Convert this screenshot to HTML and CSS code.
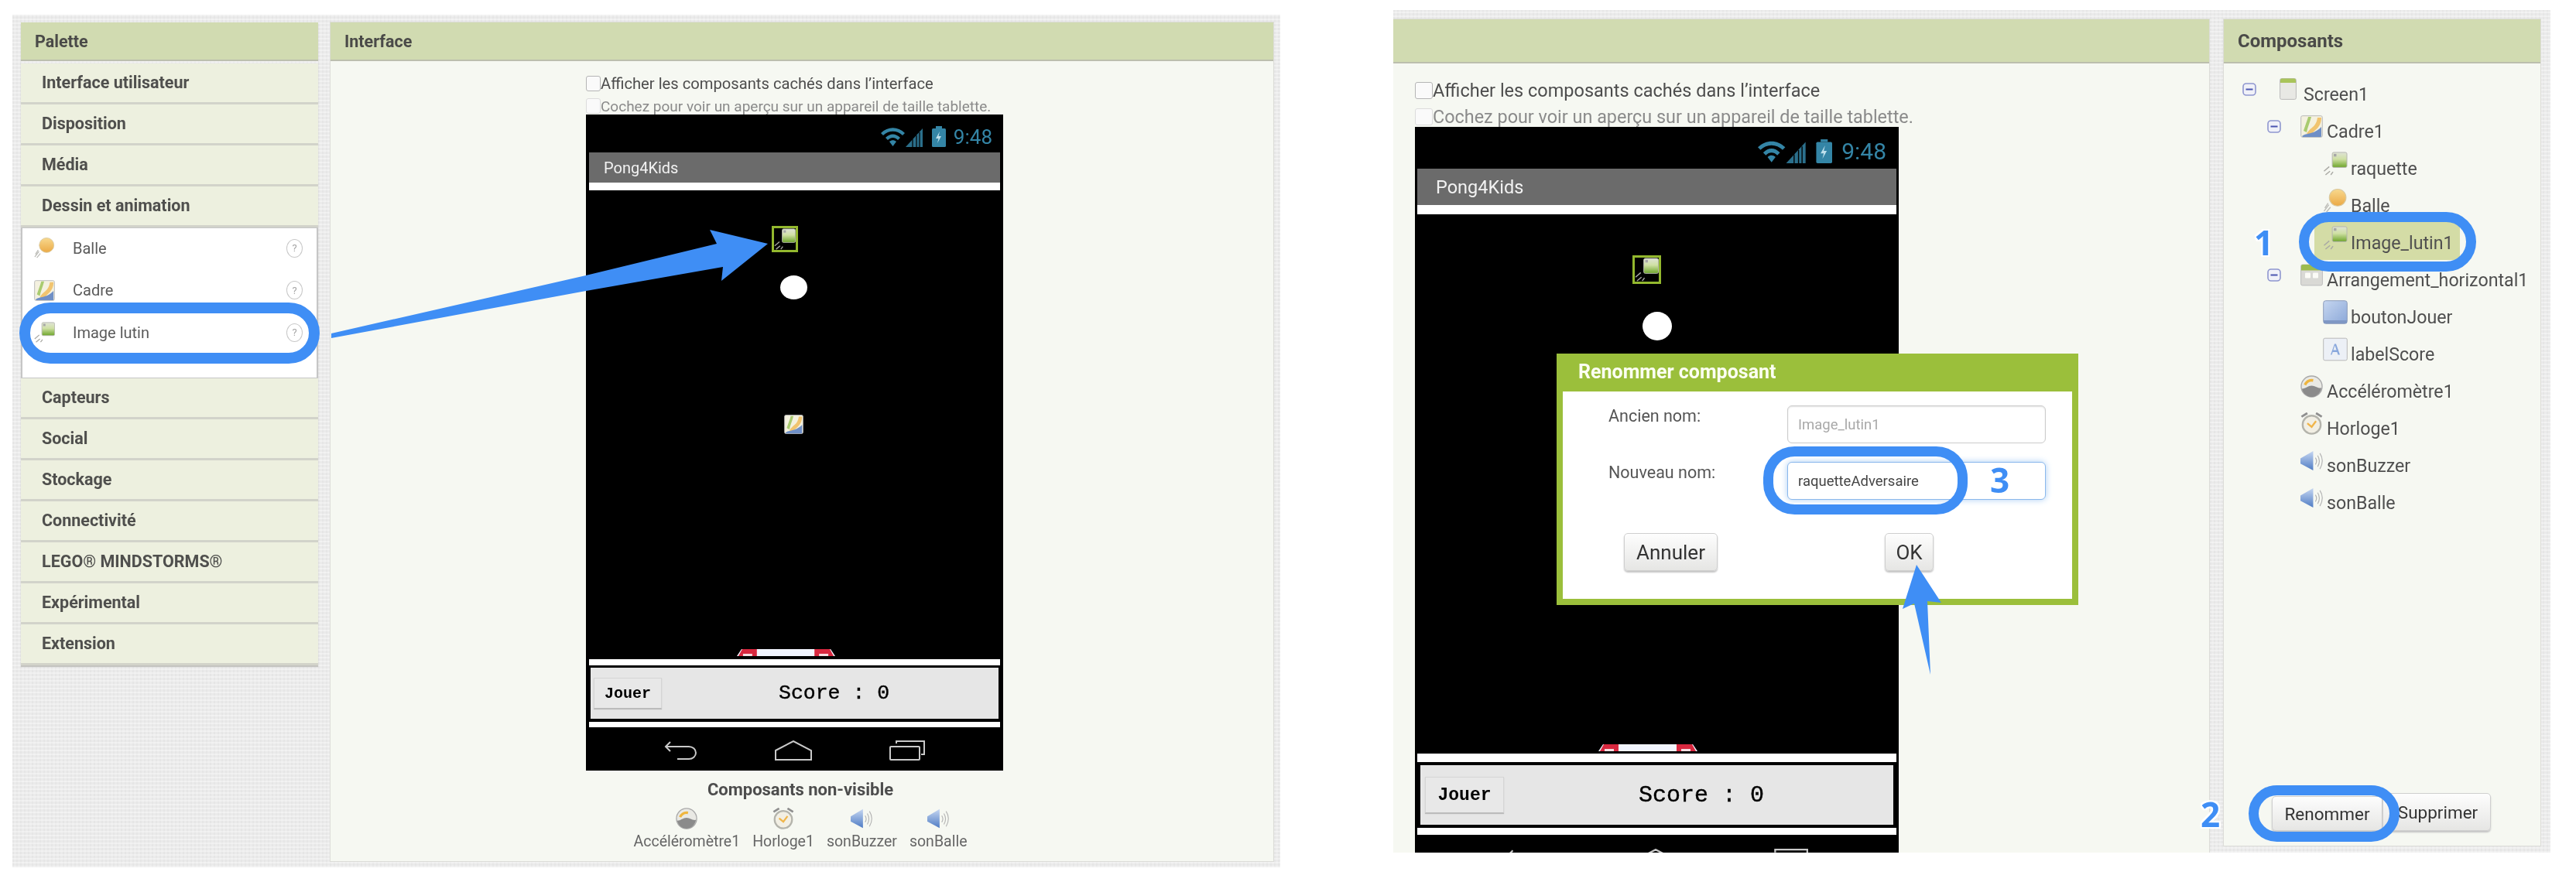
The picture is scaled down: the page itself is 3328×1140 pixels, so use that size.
FILE: index.html
```html
<!DOCTYPE html>
<html lang="fr">
<head>
<meta charset="utf-8">
<title>Pong4Kids</title>
<link rel="stylesheet" href="styles.css">
</head>
<body>
<svg class="defs" width="0" height="0" aria-hidden="true">
  <defs>
    <linearGradient id="gBall" x1="0" y1="0" x2="0" y2="1"><stop offset="0" stop-color="#f8d98e"/><stop offset="1" stop-color="#eba945"/></linearGradient>
    <linearGradient id="gImg" x1="0" y1="0" x2="0" y2="1"><stop offset="0" stop-color="#dfe3d6"/><stop offset=".45" stop-color="#cfe0a4"/><stop offset="1" stop-color="#6da52a"/></linearGradient>
    <linearGradient id="gBtn" x1="0" y1="0" x2="1" y2="1"><stop offset="0" stop-color="#c6d6f0"/><stop offset="1" stop-color="#8ba8d8"/></linearGradient>
    <linearGradient id="gSpk" x1="0" y1="0" x2="0" y2="1"><stop offset="0" stop-color="#c5d6f1"/><stop offset="1" stop-color="#4f7cc4"/></linearGradient>
  </defs>
  <symbol id="i-ball" viewBox="0 0 30 30">
    <path d="M1 28 7 20M4 29 9 23M2 24 6 18" stroke="#bdbdb8" stroke-width="1.4" fill="none"/>
    <circle cx="18" cy="11" r="10.5" fill="url(#gBall)" stroke="#d9c9a0"/>
  </symbol>
  <symbol id="i-sprite" viewBox="0 0 32 32">
    <path d="M1 26 8 20M3 31 9 26M10 31 13 27" stroke="#a9a9a4" stroke-width="1.5" fill="none"/>
    <rect x="12" y="1" width="19.5" height="20" rx="2" fill="url(#gImg)" stroke="#b5b5b0"/>
    <rect x="14" y="3" width="3.5" height="3.5" fill="#a6a6a6"/>
  </symbol>
  <symbol id="i-frame" viewBox="0 0 29 29">
    <rect x=".7" y=".7" width="27.6" height="27.6" rx="2" fill="#f4f1df" stroke="#b9b9b9"/>
    <path d="M4 20C8 8 9 6 10 2h4C12 10 9 16 8 22Z" fill="#a9cb6f"/>
    <path d="M8 24C14 14 20 16 22 3h5C27 16 18 19 14 25Z" fill="#f1c46f"/>
    <path d="M2 27C8 22 16 26 27 15v12a1 1 0 0 1-1 1H3Z" fill="#6f8fc6"/>
  </symbol>
  <symbol id="i-minus" viewBox="0 0 18 17">
    <rect x="1" y="1" width="16" height="15" rx="4" fill="#f0f1f8" stroke="#8f96cf" stroke-width="1.6"/>
    <path d="M4.5 8.5h9" stroke="#4b55b0" stroke-width="2"/>
  </symbol>
  <symbol id="i-screen" viewBox="0 0 22 28">
    <rect x=".6" y=".6" width="20.8" height="26.8" rx="2" fill="#e8e8e4" stroke="#b9b9b9"/>
    <path d="M1 2.500a2 2 0 0 1 2-2h16a2 2 0 0 1 2 2V6H1Z" fill="#a9c45a"/>
  </symbol>
  <symbol id="i-arr" viewBox="0 0 29 28">
    <rect x=".6" y=".6" width="27.8" height="26.800" rx="2" fill="#d9d9d5" stroke="#bdbdbd"/>
    <path d="M1 2.500a2 2 0 0 1 2-2h23a2 2 0 0 1 2 2V8H1Z" fill="#9dbb4d"/>
    <rect x="6" y="11" width="7" height="7" rx="1" fill="#fbfbf6"/>
    <rect x="16" y="11" width="7" height="7" rx="1" fill="#fbfbf6"/>
  </symbol>
  <symbol id="i-button" viewBox="0 0 32 31">
    <rect x=".7" y=".7" width="30.600" height="29.600" rx="3" fill="url(#gBtn)" stroke="#8e9dbb"/>
    <rect x="1" y="26" width="30" height="4" fill="#7f97c4"/>
  </symbol>
  <symbol id="i-label" viewBox="0 0 32 30">
    <rect x=".7" y=".7" width="30.600" height="28.600" rx="2" fill="#ecf0f6" stroke="#b8b8b8"/>
    <path d="M10 22 15 8h2l5 14h-2.500l-1.200-3.600h-5.600L11.500 22ZM13.400 16h4.200L15.500 10Z" fill="#88a7dc"/>
  </symbol>
  <symbol id="i-gauge" viewBox="0 0 30 30">
    <circle cx="15" cy="15" r="14" fill="#e9e9e4" stroke="#a9a9a9" stroke-width="1.400"/>
    <path d="M2 18c5 0 8-4 13-4s8 4 13 3c-1 7-7 12-13 12S3 24 2 18Z" fill="#8b8b8b"/>
    <path d="M6 13c2-4 6-7 11-6" stroke="#efb63f" stroke-width="3.500" fill="none"/>
  </symbol>
  <symbol id="i-clock" viewBox="0 0 30 31">
    <path d="M1 6 9 1M29 6 21 1" stroke="#8f8f8f" stroke-width="3"/>
    <circle cx="15" cy="17" r="12.500" fill="#f2efe4" stroke="#b4b4ac" stroke-width="2.500"/>
    <path d="M9 15l6 5 6-8" stroke="#f0b54a" stroke-width="2.500" fill="none"/>
  </symbol>
  <symbol id="i-speaker" viewBox="0 0 30 28">
    <path d="M0 11 17 1v26L0 18Z" fill="url(#gSpk)"/>
    <path d="M20 10c2 3 2 6 0 9M23 7c3 5 3 10 0 15M26 4c4 6 4 14 0 21" stroke="#b3b3b3" stroke-width="1.200" fill="none"/>
  </symbol>
  <symbol id="i-status" viewBox="0 0 84 27">
    <path d="M0 9C9 0 22 0 31 9l-3 3C21 5 10 5 3 12ZM6 15c6-6 13-6 19 0l-3 3c-4-4-9-4-13 0ZM11 20c3-2.500 6-2.500 9 0l-4.500 6Z" fill="#3485a6"/>
    <path d="M32 27 54 3v24Z" fill="#2b6f8b"/>
    <path d="M41 27V17M46 27V12M50 27V8" stroke="#000" stroke-width="1.200"/>
    <rect x="66" y="3" width="18" height="24" rx="1.500" fill="#3485a6"/>
    <rect x="71" y="0" width="8" height="3" fill="#3485a6"/>
    <path d="M76 7 71 16h3.500l-1.500 6 5-9h-3.500Z" fill="#bfe0ec"/>
  </symbol>
  <symbol id="i-back" viewBox="0 0 43 26">
    <path d="M8 2 2 8l6 6M2 8h30a9 8 0 0 1 0 16H17" fill="none" stroke="#c9c9c9" stroke-width="2"/>
  </symbol>
  <symbol id="i-home" viewBox="0 0 48 26">
    <path d="M1 13 24 1l23 12v12H1Z" fill="none" stroke="#c9c9c9" stroke-width="2"/>
  </symbol>
  <symbol id="i-recent" viewBox="0 0 46 26">
    <path d="M9 4V1h36v17h-4" fill="none" stroke="#c9c9c9" stroke-width="2"/>
    <rect x="1" y="8" width="38" height="17" rx="1" fill="none" stroke="#c9c9c9" stroke-width="2"/>
  </symbol>
  <symbol id="i-paddle" viewBox="0 0 130 9">
    <path d="M1 9 7 0h116l6 9Z" fill="#f2f5ff"/>
    <path d="M3 9 8 0h19v9ZM102 0h20l5 9h-25Z" fill="#d8283f"/>
    <path d="M9 6h12v3H9ZM108 6h12v3h-12Z" fill="#f6dfe2"/>
  </symbol>
</svg>

<main class="stage">

  <section class="shot shot-a">
    <div class="palette">
      <h2 class="head">Palette</h2>
      <div class="cat">Interface utilisateur</div>
      <div class="cat">Disposition</div>
      <div class="cat">Média</div>
      <div class="cat">Dessin et animation</div>
      <ul class="tools">
        <li class="tool"><svg class="tool-i"><use href="#i-ball"/></svg><span class="tool-t">Balle</span><span class="help">?</span></li>
        <li class="tool"><svg class="tool-i"><use href="#i-frame"/></svg><span class="tool-t">Cadre</span><span class="help">?</span></li>
        <li class="tool"><svg class="tool-i"><use href="#i-sprite"/></svg><span class="tool-t">Image lutin</span><span class="help">?</span></li>
      </ul>
      <div class="cat">Capteurs</div>
      <div class="cat">Social</div>
      <div class="cat">Stockage</div>
      <div class="cat">Connectivité</div>
      <div class="cat">LEGO® MINDSTORMS®</div>
      <div class="cat">Expérimental</div>
      <div class="cat">Extension</div>
    </div>

    <div class="panel panel-view">
      <h2 class="head">Interface</h2>
      <div class="view-body view-a">
        <div class="viewer">
          <div class="chk"><i class="box"></i>Afficher les composants cachés dans l’interface</div>
          <div class="chk chk-dim"><i class="box"></i>Cochez pour voir un aperçu sur un appareil de taille tablette.</div>
          <div class="phone">
            <div class="status"><svg class="st-i"><use href="#i-status"/></svg><span class="clock">9:48</span></div>
            <div class="title">Pong4Kids</div>
            <div class="strip strip-top"></div>
            <div class="canvas">
              <div class="sel-box"><svg><use href="#i-sprite"/></svg></div>
              <div class="ball"></div>
              <svg class="cadre"><use href="#i-frame"/></svg>
              <svg class="paddle" preserveAspectRatio="none"><use href="#i-paddle"/></svg>
            </div>
            <div class="strip strip-low"></div>
            <div class="hbar"><div class="jouer">Jouer</div><div class="score">Score : 0</div></div>
            <div class="strip strip-end"></div>
            <div class="nav"><svg class="n-back"><use href="#i-back"/></svg><svg class="n-home"><use href="#i-home"/></svg><svg class="n-rec"><use href="#i-recent"/></svg></div>
          </div>
          <div class="nv-title">Composants non-visible</div>
          <div class="nv-list">
            <div class="nv"><svg class="nv-i"><use href="#i-gauge"/></svg>Accéléromètre1</div>
            <div class="nv"><svg class="nv-i"><use href="#i-clock"/></svg>Horloge1</div>
            <div class="nv"><svg class="nv-i"><use href="#i-speaker"/></svg>sonBuzzer</div>
            <div class="nv"><svg class="nv-i"><use href="#i-speaker"/></svg>sonBalle</div>
          </div>
        </div>
      </div>
    </div>

    <svg class="annot annot-a" viewBox="16 19 1638 1102">
      <rect class="pill" x="32" y="398" width="374" height="65" rx="33"/>
      <polygon class="arrow" points="428,431 757,356 926,315 917,297 992,315 932,363 934,345 757,376 428,437"/>
    </svg>
  </section>

  <section class="shot shot-b">
    <div class="panel panel-view">
      <h2 class="head head-empty"></h2>
      <div class="view-body view-b">
        <div class="viewer">
          <div class="chk"><i class="box"></i>Afficher les composants cachés dans l’interface</div>
          <div class="chk chk-dim"><i class="box"></i>Cochez pour voir un aperçu sur un appareil de taille tablette.</div>
          <div class="phone">
            <div class="status"><svg class="st-i"><use href="#i-status"/></svg><span class="clock">9:48</span></div>
            <div class="title">Pong4Kids</div>
            <div class="strip strip-top"></div>
            <div class="canvas">
              <div class="sel-box"><svg><use href="#i-sprite"/></svg></div>
              <div class="ball"></div>
              <svg class="paddle" preserveAspectRatio="none"><use href="#i-paddle"/></svg>
            </div>
            <div class="strip strip-low"></div>
            <div class="hbar"><div class="jouer">Jouer</div><div class="score">Score : 0</div></div>
            <div class="strip strip-end"></div>
            <div class="nav"><svg class="n-back"><use href="#i-back"/></svg><svg class="n-home"><use href="#i-home"/></svg><svg class="n-rec"><use href="#i-recent"/></svg></div>
          </div>
        </div>
      </div>
    </div>

    <aside class="panel panel-tree">
      <h2 class="head head-tree">Composants</h2>
      <div class="tree">
        <div class="row l0"><svg class="minus"><use href="#i-minus"/></svg><svg class="ic ic-s"><use href="#i-screen"/></svg><span>Screen1</span></div>
        <div class="row l1"><svg class="minus"><use href="#i-minus"/></svg><svg class="ic ic-m"><use href="#i-frame"/></svg><span>Cadre1</span></div>
        <div class="row l2"><svg class="ic ic-l"><use href="#i-sprite"/></svg><span>raquette</span></div>
        <div class="row l2"><svg class="ic ic-l"><use href="#i-ball"/></svg><span>Balle</span></div>
        <div class="row l2-sel"><div class="sel"><svg class="ic ic-l"><use href="#i-sprite"/></svg><span>Image_lutin1</span></div></div>
        <div class="row l1"><svg class="minus"><use href="#i-minus"/></svg><svg class="ic ic-m"><use href="#i-arr"/></svg><span>Arrangement_horizontal1</span></div>
        <div class="row l2"><svg class="ic ic-l"><use href="#i-button"/></svg><span>boutonJouer</span></div>
        <div class="row l2"><svg class="ic ic-l"><use href="#i-label"/></svg><span>labelScore</span></div>
        <div class="row l1n"><svg class="ic ic-m"><use href="#i-gauge"/></svg><span>Accéléromètre1</span></div>
        <div class="row l1n"><svg class="ic ic-m"><use href="#i-clock"/></svg><span>Horloge1</span></div>
        <div class="row l1n"><svg class="ic ic-m"><use href="#i-speaker"/></svg><span>sonBuzzer</span></div>
        <div class="row l1n"><svg class="ic ic-m"><use href="#i-speaker"/></svg><span>sonBalle</span></div>
      </div>
      <div class="actions">
        <div class="btn btn-ren">Renommer</div>
        <div class="btn btn-del">Supprimer</div>
      </div>
    </aside>

    <div class="dialog">
      <div class="dlg-title">Renommer composant</div>
      <div class="dlg-body">
        <div class="field"><span class="f-label">Ancien nom:</span><div class="input input-off">Image_lutin1</div></div>
        <div class="field"><span class="f-label">Nouveau nom:</span><div class="input input-on">raquetteAdversaire</div></div>
        <div class="dlg-btns"><div class="btn btn-cancel">Annuler</div><div class="btn btn-ok">OK</div></div>
      </div>
    </div>

    <svg class="annot annot-b" viewBox="1800 13 1495 1089">
      <rect class="pill" x="2976.500" y="280.500" width="216" height="64" rx="32"/>
      <rect class="pill" x="2284.500" y="583.500" width="251" height="75" rx="34"/>
      <rect class="pill" x="2911.500" y="1021.500" width="182" height="60" rx="30"/>
      <polygon class="arrow" points="2476,730 2508,779 2490,777 2494,872 2473,780 2458,787"/>
    </svg>
    <b class="num num-1">1</b>
    <b class="num num-2">2</b>
    <b class="num num-3">3</b>
  </section>
</main>
</body>
</html>
```

FILE: styles.css
```css
* { box-sizing: border-box; }
html, body { margin: 0; padding: 0; background: #fff; }
body { width: 3328px; height: 1140px; overflow: hidden; font-family: Roboto, "Liberation Sans", sans-serif; color: #444; }
.defs { position: absolute; }
svg { display: block; }
h2 { margin: 0; }
ul { margin: 0; padding: 0; list-style: none; }

.stage { display: flex; align-items: flex-start; }

.shot {
  position: relative;
  display: flex;
  overflow: hidden;
  filter: blur(.6px);
  background-color: #ebebeb;
  background-image:
    repeating-linear-gradient(0deg, rgba(255,255,255,.35) 0 2px, transparent 2px 5px),
    repeating-linear-gradient(90deg, rgba(0,0,0,.025) 0 2px, transparent 2px 5px);
}
.shot-a { width: 1638px; height: 1102px; margin: 19px 0 0 16px; padding: 10px 9px 8px 11px; gap: 16px; }
.shot-b { width: 1495px; height: 1089px; margin: 13px 0 0 146px; padding: 12px 13px 0 0; gap: 19px; }

/* headers */
.head {
  flex: none;
  display: flex; align-items: center;
  background: #d1dbb1;
  border-bottom: 2px solid #bcbfae;
  font-weight: 700; color: #4a4a48;
}
.shot-a .head { height: 50px; padding-left: 18px; font-size: 21.500px; }
.shot-b .head { height: 57px; padding-left: 18px; font-size: 24px; }

/* palette */
.palette { width: 384px; flex: none; align-self: flex-start; box-shadow: 0 2px 1px #c4c4c0; }
.palette .head { margin-bottom: 3px; }
.cat {
  height: 53px; padding: 0 0 2px 27px;
  display: flex; align-items: center;
  background: #edf0df;
  border-bottom: 3px solid #d2d3ca;
  font-size: 21.500px; font-weight: 700; color: #4f4f4d;
}
.tools { height: 195px; padding: 0 2px; background: #fff; border: 1px solid #c6c6c6; border-width: 1px 2px; }
.tool { height: 54.500px; display: flex; align-items: center; padding: 0 16px 3px 13px; }
.tool-i { width: 27px; height: 27px; flex: none; }
.tool-t { margin-left: 23px; flex: 1; font-size: 20px; color: #5a5a5a; }
.help {
  width: 21px; height: 24px; border: 1.500px solid #c8c8c8; border-radius: 50%;
  display: flex; align-items: center; justify-content: center;
  font-size: 13px; color: #a6a6a6;
}

/* panels */
.panel { background: #f6f8f2; display: flex; flex-direction: column; box-shadow: 0 0 0 1px #dcdcd8; }
.panel-view { flex: 1; min-width: 0; }
.panel-tree { width: 409px; flex: none; margin-bottom: 9px; }
.view-body { flex: 1; }
.view-a { padding: 19px 0 0 330px; }
.view-b { padding: 24px 0 0 28px; }
.viewer { width: 554px; }
.view-b .viewer { width: 640px; }

.chk { display: flex; align-items: center; white-space: nowrap; color: #4d4d4d; }
.chk-dim { color: #8a8a8a; }
.box { flex: none; background: #fafafa; border: 1px solid #b5b5b5; border-radius: 3px; }
.chk-dim .box { border-color: #dcdcdc; }
.view-a .chk { font-size: 20.200px; height: 20px; }
.view-a .chk-dim { font-size: 19px; height: 18px; margin-top: 10px; }
.view-a .box { width: 19px; height: 20px; }
.view-b .chk { font-size: 23.500px; height: 22px; }
.view-b .chk-dim { font-size: 23.400px; margin-top: 12px; }
.view-b .box { width: 23px; height: 22px; }

/* phone */
.phone { background: #000; display: flex; flex-direction: column; }
.view-a .phone { width: 539px; height: 848px; margin-top: 2px; }
.view-b .phone { width: 625px; height: 979px; margin-top: 2px; }
.status { display: flex; justify-content: flex-end; align-items: center; color: #3485a6; flex: none; }
.clock { font-family: Roboto, sans-serif; }
.view-a .status { height: 49px; padding: 8px 14px 0 0; gap: 10px; }
.view-a .clock { font-size: 26px; }
.view-a .st-i { width: 84px; height: 27px; }
.view-b .status { height: 54px; padding: 9px 16px 0 0; gap: 12px; }
.view-b .clock { font-size: 30px; }
.view-b .st-i { width: 96px; height: 31px; }
.title { flex: none; background: #6b6b6b; color: #f2f2f2; display: flex; align-items: center; }
.view-a .title { height: 39px; margin: 0 4px; padding-left: 19px; font-size: 20px; }
.view-b .title { height: 47px; margin: 0 3px; padding-left: 24px; font-size: 23.500px; }
.strip { flex: none; background: #fff; }
.view-a .strip { margin: 0 4px; }
.view-b .strip { margin: 0 3px; }
.view-a .strip-top { height: 10px; }
.view-a .strip-low { height: 8px; }
.view-a .strip-end { height: 7px; }
.view-b .strip-top { height: 12px; }
.view-b .strip-low { height: 11px; }
.view-b .strip-end { height: 9px; }
.canvas { flex: 1; position: relative; }
.sel-box { position: absolute; border: 3px solid #93b82e; }
.sel-box svg { width: 100%; height: 100%; }
.ball { position: absolute; background: #fff; border-radius: 50%; }
.cadre { position: absolute; left: 256px; top: 289px; width: 25px; height: 27px; }
.paddle { position: absolute; }
.view-a .sel-box { left: 240px; top: 46px; width: 34px; height: 34px; }
.view-a .ball { left: 251px; top: 110px; width: 35px; height: 31px; }
.view-a .paddle { left: 194px; top: 593px; width: 129px; height: 9px; }
.view-b .sel-box { left: 281px; top: 53px; width: 37px; height: 37px; }
.view-b .ball { left: 294px; top: 126px; width: 38px; height: 37px; }
.view-b .paddle { left: 228px; top: 685px; width: 146px; height: 9px; }

.hbar { flex: none; background: #e6e6e6; display: flex; align-items: center; font-family: "Liberation Mono", monospace; color: #000; }
.jouer { background: #e8e8e8; border: 1px solid #d5d5d5; border-bottom-color: #bbb; box-shadow: 0 1px 1px #bbb; display: flex; align-items: center; justify-content: center; font-weight: 700; }
.score { -webkit-text-stroke: .4px #000; }
.view-a .hbar { height: 66px; margin: 3px 6px 4px; padding-left: 4px; }
.view-a .jouer { width: 88px; height: 40px; font-size: 20px; }
.view-a .score { margin-left: 151px; font-size: 26.500px; }
.view-b .hbar { height: 77px; margin: 4px 7px; padding-left: 6px; }
.view-b .jouer { width: 102px; height: 47px; font-size: 23px; }
.view-b .score { margin-left: 174px; font-size: 30px; }

.nav { flex: none; display: flex; justify-content: center; align-items: flex-start; }
.view-a .nav { height: 56px; padding-top: 17px; gap: 100px; }
.n-back { width: 43px; height: 26px; }
.n-home { width: 48px; height: 26px; }
.n-rec { width: 46px; height: 26px; }
.view-b .nav { height: 64px; padding-top: 18px; gap: 116px; }
.view-b .n-back { width: 50px; height: 30px; }
.view-b .n-home { width: 56px; height: 30px; }
.view-b .n-rec { width: 53px; height: 30px; }

/* non-visible */
.nv-title { text-align: center; margin-top: 13px; font-size: 22px; font-weight: 700; color: #4d4d4d; line-height: 23px; }
.nv-list { display: flex; justify-content: center; gap: 16px; margin-top: 12px; }
.nv { display: flex; flex-direction: column; align-items: center; font-size: 19.500px; color: #666; line-height: 22px; }
.nv-i { width: 28px; height: 28px; margin-bottom: 5px; }

/* tree */
.tree { padding-top: 9px; }
.row { height: 48px; display: flex; align-items: center; font-size: 23.200px; color: #4f4f4f; }
.row span { margin-top: 14px; white-space: nowrap; }
.minus { width: 18px; height: 17px; flex: none; }
.ic { flex: none; }
.ic-s { width: 22px; height: 28px; margin: 0 9px 0 30px; }
.ic-m { width: 29px; height: 29px; margin: 0 5px 0 25px; }
.ic-l { width: 32px; height: 31px; margin-right: 4px; }
.l0 { padding-left: 24px; }
.l1 { padding-left: 56px; }
.l1n { padding-left: 74px; }
.l2 { padding-left: 128px; }
.l2-sel { padding-left: 117px; }
.sel { display: flex; align-items: center; width: 188px; height: 50px; margin-top: 8px; padding-left: 11px; background: #d4dca6; flex: none; }
.sel .ic { margin-bottom: 8px; }
.row .sel span { margin-top: 6px; }

.actions { margin-top: auto; display: flex; align-items: flex-end; padding: 0 0 19px 62px; }
.btn {
  display: flex; align-items: center; justify-content: center;
  background: linear-gradient(#fdfdfd, #e6e6e4);
  border: 1px solid #cfcfcf; border-radius: 5px;
  box-shadow: 0 2px 2px #c5c5c5;
  color: #333; font-size: 22.500px;
}
.btn-ren { width: 143px; height: 45px; }
.btn-del { width: 140px; height: 49px; padding-left: 3px; }

/* dialog */
.dialog {
  position: absolute; left: 211px; top: 444px; width: 674px; height: 325px;
  display: flex; flex-direction: column;
  background: #9bbf3b; padding: 0 8px 8px;
}
.dlg-title { height: 49px; padding: 0 0 2px 20px; display: flex; align-items: center; color: #fcfff2; font-size: 25px; font-weight: 700; }
.dlg-body { flex: 1; background: #fff; padding: 18px 0 0 59px; }
.field { display: flex; height: 49px; margin-bottom: 24px; color: #555; font-size: 21.500px; }
.f-label { width: 231px; padding-top: 1px; }
.input { width: 334px; height: 49px; padding-left: 13px; display: flex; align-items: center; border: 1px solid #ccc; border-radius: 6px; font-size: 18.500px; background: #fff; }
.input-off { color: #a8a8a8; box-shadow: inset 0 1px 2px #e2e2e2; }
.input-on { color: #444; border-color: #8ab8ec; box-shadow: 0 0 8px #a9cdf4; }
.dlg-btns { display: flex; margin-top: 43px; padding-left: 20px; gap: 216px; }
.btn-cancel { width: 121px; height: 49px; font-size: 26px; }
.btn-ok { width: 63px; height: 49px; font-size: 26px; }

/* annotations */
.annot { position: absolute; left: 0; top: 0; pointer-events: none; }
.annot-a { width: 1638px; height: 1102px; }
.annot-b { width: 1495px; height: 1089px; }
.pill { fill: none; stroke: #3f8ef5; stroke-width: 13; }
.annot-a .pill { stroke-width: 14; }
.arrow { fill: #3f8ef5; }
.num {
  position: absolute; font-family: "Open Sans", Roboto, sans-serif; font-weight: 700; color: #3f8ef5; line-height: 1;
  text-shadow: 2px 0 0 #fff, -2px 0 0 #fff, 0 2px 0 #fff, 0 -2px 0 #fff, 2px 2px 0 #fff, -2px 2px 0 #fff, 2px -2px 0 #fff, -2px -2px 0 #fff;
}
.num-1 { left: 1112px; top: 278px; font-size: 44px; }
.num-2 { left: 1043px; top: 1017px; font-size: 44px; }
.num-3 { left: 771px; top: 585px; font-size: 44px; }
```
